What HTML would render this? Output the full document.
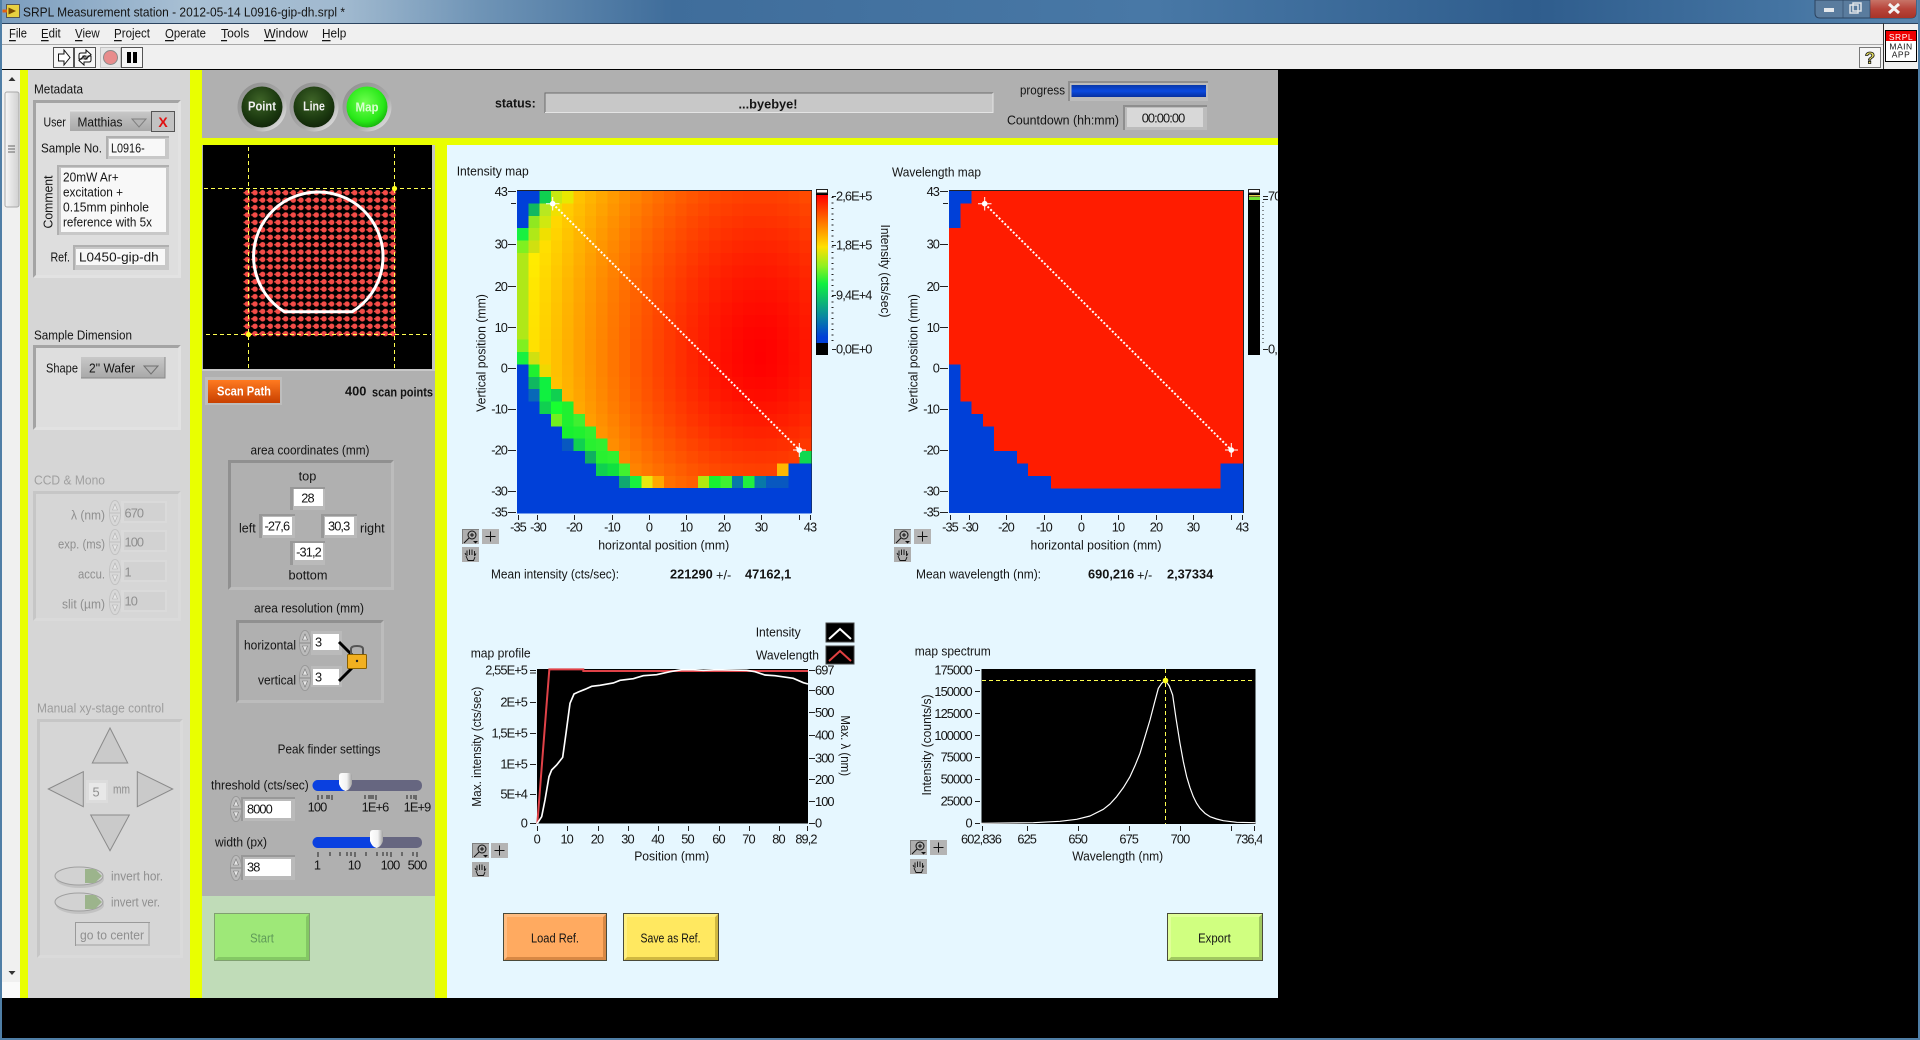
<!DOCTYPE html>
<html><head><meta charset="utf-8"><title>SRPL Measurement station</title>
<style>
html,body{margin:0;padding:0;background:#000;width:1920px;height:1040px;overflow:hidden}
svg{display:block}
text{font-family:"Liberation Sans","DejaVu Sans",sans-serif;font-size:12.8px;fill:#141414;dominant-baseline:central}
.m{text-anchor:middle}.e{text-anchor:end}.b{font-weight:bold}
.d text,text.d{fill:#8f8f8f}
.n text,text.n{letter-spacing:-.9px}
.w{fill:#fff}
</style></head><body>
<svg xmlns="http://www.w3.org/2000/svg" width="1920" height="1040" viewBox="0 0 1920 1040">
<defs>
<linearGradient id="tb" x1="0" x2="1" y1="0" y2="0"><stop offset="0" stop-color="#7b9dbe"/><stop offset=".1" stop-color="#a9c0d4"/><stop offset=".18" stop-color="#a0b9cf"/><stop offset=".25" stop-color="#6f94b6"/><stop offset=".35" stop-color="#3f6d9b"/><stop offset=".6" stop-color="#4878a6"/><stop offset=".8" stop-color="#2f5d8d"/><stop offset=".93" stop-color="#4474a2"/><stop offset="1" stop-color="#5a86ae"/></linearGradient>
<linearGradient id="cb" x1="0" x2="0" y1="0" y2="1"><stop offset="0" stop-color="#ff0000"/><stop offset=".2" stop-color="#ff8000"/><stop offset=".35" stop-color="#ffe000"/><stop offset=".48" stop-color="#90f020"/><stop offset=".6" stop-color="#10f040"/><stop offset=".82" stop-color="#0888a0"/><stop offset=".96" stop-color="#0040d8"/><stop offset="1" stop-color="#0040d8"/></linearGradient>
<linearGradient id="hmf" x1="0" x2="1" y1="0" y2="0"><stop offset="0" stop-color="#ffd000"/><stop offset=".3" stop-color="#ff9000"/><stop offset=".7" stop-color="#ff2800"/><stop offset="1" stop-color="#ff3000"/></linearGradient>
<linearGradient id="or" x1="0" x2="0" y1="0" y2="1"><stop offset="0" stop-color="#ff7a20"/><stop offset="1" stop-color="#c84000"/></linearGradient>
<linearGradient id="drop" x1="0" x2="0" y1="0" y2="1"><stop offset="0" stop-color="#c8c8c8"/><stop offset="1" stop-color="#a8a8a8"/></linearGradient>
<linearGradient id="bar" x1="0" x2="0" y1="0" y2="1"><stop offset="0" stop-color="#0838a8"/><stop offset=".5" stop-color="#0a4ae0"/><stop offset="1" stop-color="#0630a0"/></linearGradient>
<linearGradient id="thumb" x1="0" x2="1" y1="0" y2="0"><stop offset="0" stop-color="#f6f6f6"/><stop offset="1" stop-color="#d0d0d0"/></linearGradient>
<linearGradient id="knob" x1="0" x2="1" y1="0" y2="0"><stop offset="0" stop-color="#fff"/><stop offset=".6" stop-color="#f2f2f2"/><stop offset="1" stop-color="#a0a0a0"/></linearGradient>
<linearGradient id="closeb" x1="0" x2="0" y1="0" y2="1"><stop offset="0" stop-color="#c87468"/><stop offset=".5" stop-color="#b8443a"/><stop offset="1" stop-color="#a83428"/></linearGradient>
<radialGradient id="ledd" cx=".45" cy=".35" r=".75"><stop offset="0" stop-color="#3f6528"/><stop offset=".6" stop-color="#1c3a10"/><stop offset="1" stop-color="#0c1c06"/></radialGradient>
<radialGradient id="ledg" cx=".45" cy=".4" r=".7"><stop offset="0" stop-color="#70ff50"/><stop offset=".65" stop-color="#28e818"/><stop offset="1" stop-color="#109808"/></radialGradient>
<linearGradient id="ring" x1="0" x2="1" y1="0" y2="1"><stop offset="0" stop-color="#8e8e8e"/><stop offset=".6" stop-color="#a8a8a8"/><stop offset="1" stop-color="#f0f0f0"/></linearGradient>
<pattern id="dots" x="243.5" y="189" width="7.67" height="7.42" patternUnits="userSpaceOnUse"><circle cx="3.8" cy="3.7" r="2.7" fill="#f44c48"/><rect x="0" y="3" width="2" height="1.4" fill="#f44c48"/></pattern>
<symbol id="spin" viewBox="0 0 12 26" width="12" height="26"><ellipse cx="6" cy="13" rx="5.6" ry="12.6" fill="#bbb" stroke="#999"/><path d="M.5 13H11.5" stroke="#888"/><path d="M6 4 3.5 10H8.5ZM6 22 3.5 16H8.5Z" fill="#e6e6e6" stroke="#777" stroke-width=".6"/></symbol>
<symbol id="spind" viewBox="0 0 12 26" width="12" height="26"><ellipse cx="6" cy="13" rx="5.6" ry="12.6" fill="#d8d8d8" stroke="#c2c2c2"/><path d="M.5 13H11.5" stroke="#c0c0c0"/><path d="M6 4 3.5 10H8.5ZM6 22 3.5 16H8.5Z" fill="#e6e6e6" stroke="#b0b0b0" stroke-width=".6"/></symbol>
<symbol id="zi" viewBox="0 0 17 15" width="17" height="15"><rect width="17" height="15" fill="#aeaeae"/><path d="M0 0H17V1H1V15H0Z" fill="#808080"/><circle cx="10" cy="6" r="4" fill="none" stroke="#111"/><path d="M8 6H12M10 4V8M7 9 2 14" stroke="#111" fill="none"/><path d="M11 12H16L13.5 14.5Z" fill="#111"/></symbol>
<symbol id="pl" viewBox="0 0 17 15" width="17" height="15"><rect width="17" height="15" fill="#b4b4b4"/><path d="M8.5 2.5V12.5M3.5 7.5H13.5" stroke="#111"/></symbol>
<symbol id="hd" viewBox="0 0 17 15" width="17" height="15"><rect width="17" height="15" fill="#aeaeae"/><path d="M4 8 3 6M5 9V4.5M5 5V3.5M7.5 8V2.5M10 8V2.5M12.5 8.5V4M12.5 9 14 6.5M4 9 6 13.5H11.5L13 10" stroke="#111" fill="none" stroke-width=".9"/></symbol>
</defs>

<rect width="1920" height="1040" fill="#000"/>
<!-- window chrome -->
<rect width="1920" height="23" fill="url(#tb)"/>
<rect x="0" y="0" width="2" height="1040" fill="#4f7ea6"/>
<rect y="1038" width="1920" height="2" fill="#4f7ea6"/>
<rect x="1918" y="0" width="2" height="1040" fill="#4f7ea6"/>
<rect x="6.5" y="4.5" width="13" height="13" fill="#e8d040" stroke="#555"/><path d="M8.5 7.5 16 11 8.5 14.5Z" fill="#7a4a00"/><path d="M2.5 11H7" stroke="#e06010" stroke-width="3"/>
<text x="23" y="12" style="font-size:13px" textLength="322">SRPL Measurement station - 2012-05-14 L0916-gip-dh.srpl *</text>
<path d="M1815 0V13Q1815 18 1820 18H1911Q1916 18 1916 13V0Z" fill="#5a7c9e" stroke="#2c4460"/>
<path d="M1870 0H1916V13Q1916 18 1911 18H1870Z" fill="url(#closeb)"/>
<path d="M1843 0V18M1870 0V18" stroke="#2c4460" stroke-opacity=".6"/>
<rect x="1824" y="8" width="10" height="4" fill="#e4e8ec"/>
<rect x="1850" y="5" width="8" height="8" fill="none" stroke="#dfe4e8" stroke-width="1.5"/><rect x="1853" y="3" width="8" height="8" fill="none" stroke="#dfe4e8" stroke-width="1.5"/>
<path d="M1889 4 1899 13M1899 4 1889 13" stroke="#f4f4f4" stroke-width="3"/>

<rect x="2" y="23" width="1916" height="46" fill="#f0f0f0"/>
<rect x="2" y="23" width="1916" height="1" fill="#2c4460"/>
<rect x="2" y="44" width="1881" height="1" fill="#a8a8a8"/>
<rect x="2" y="69" width="1916" height="1" fill="#000"/>
<rect x="1883" y="23" width="1" height="46" fill="#333"/>
<g>
<text x="9" y="33" textLength="18"><tspan text-decoration="underline">F</tspan>ile</text>
<text x="41" y="33" textLength="19.7"><tspan text-decoration="underline">E</tspan>dit</text>
<text x="75" y="33" textLength="24.7"><tspan text-decoration="underline">V</tspan>iew</text>
<text x="114" y="33" textLength="36"><tspan text-decoration="underline">P</tspan>roject</text>
<text x="165" y="33" textLength="41"><tspan text-decoration="underline">O</tspan>perate</text>
<text x="221" y="33" textLength="28.3"><tspan text-decoration="underline">T</tspan>ools</text>
<text x="264" y="33" textLength="44"><tspan text-decoration="underline">W</tspan>indow</text>
<text x="322" y="33" textLength="24.3"><tspan text-decoration="underline">H</tspan>elp</text>
</g>
<!-- toolbar -->
<rect x="53.5" y="47.5" width="20" height="20" fill="#f6f6f6" stroke="#555"/>
<path d="M58.5 54H64V50L70 57.5 64 65V61H58.5Z" fill="#fff" stroke="#111"/>
<rect x="74.5" y="47.5" width="21" height="20" fill="#f6f6f6" stroke="#555"/>
<path d="M79 59V55Q79 53 81 53H86V50L91 54.5 86 59V56H83L82 59ZM91 56V60Q91 62 89 62H84V65L79 60.5 84 56V59H87L88 56Z" fill="#fff" stroke="#111"/>
<rect x="100.5" y="47.5" width="20" height="20" fill="#e6e6e6" stroke="#c4c4c4"/>
<circle cx="110.5" cy="57.5" r="7" fill="#e88c8c" stroke="#8a8a8a"/>
<rect x="121.5" y="47.5" width="21" height="20" fill="#f6f6f6" stroke="#555"/>
<rect x="127" y="52" width="4" height="11" fill="#000"/><rect x="133" y="52" width="4" height="11" fill="#000"/>
<rect x="1859.5" y="47.5" width="21" height="20" fill="#f6f6f6" stroke="#777"/>
<text x="1870" y="58" class="m b" style="font-size:17px;fill:#e8e060;stroke:#111;stroke-width:.8">?</text>
<rect x="1885.5" y="30.5" width="31" height="31" fill="#fff" stroke="#000"/>
<rect x="1886" y="31" width="30" height="10" fill="#ee0000"/>
<text x="1901" y="37" class="m w" style="font-size:8.5px;fill:#fff;letter-spacing:.5px">SRPL</text>
<text x="1901" y="46.5" class="m" style="font-size:8.5px;letter-spacing:.5px">MAIN</text>
<text x="1901" y="54.5" class="m" style="font-size:8.5px;letter-spacing:.5px">APP</text>

<!-- scrollbar -->
<rect x="2" y="70" width="18" height="928" fill="#f0f0f0"/>
<rect x="2" y="982" width="18" height="16" fill="#fafafa"/>
<path d="M12 77 8.5 81H15.5Z" fill="#333"/>
<rect x="5" y="92" width="14" height="115" rx="2" fill="url(#thumb)" stroke="#a8a8a8"/>
<path d="M8 146H15M8 149H15M8 152H15" stroke="#666"/>
<path d="M8.5 971H15.5L12 975Z" fill="#333"/>

<!-- panels -->
<rect x="20" y="70" width="8" height="928" fill="#e9ff00"/>
<rect x="28" y="70" width="162" height="928" fill="#d6d6d6"/>
<rect x="190" y="70" width="12" height="928" fill="#e9ff00"/>
<rect x="202" y="70" width="233" height="826" fill="#b0b0b0"/>
<rect x="202" y="896" width="233" height="102" fill="#c0dcb8"/>
<rect x="435" y="145" width="12" height="853" fill="#e9ff00"/>
<rect x="202" y="70" width="1076" height="68" fill="#b0b0b0"/>
<rect x="202" y="138" width="1076" height="7" fill="#e9ff00"/>
<rect x="447" y="145" width="831" height="853" fill="#e6f7ff"/>

<!-- Left panel boxes -->
<text x="34" y="89" textLength="49">Metadata</text>
<g fill="#dedede">
<path d="M33 100H181L178 103H36V275L33 278Z" fill="#a4a4a4"/><path d="M181 100V278H33L36 275H178V103Z" fill="#e2e2e2"/><rect x="36" y="103" width="142" height="172"/>
<path d="M33 345H181L178 348H36V427L33 430Z" fill="#a4a4a4"/><path d="M181 345V430H33L36 427H178V348Z" fill="#e2e2e2"/><rect x="36" y="348" width="142" height="79"/>
<path d="M33 491H181L178 494H36V618L33 621Z" fill="#c6c6c6"/><path d="M181 491V621H33L36 618H178V494Z" fill="#dadada"/><rect x="36" y="494" width="142" height="124" fill="#d6d6d6"/>
<path d="M37 719H183L180 722H40V955L37 958Z" fill="#c6c6c6"/><path d="M183 719V958H37L40 955H180V722Z" fill="#dadada"/><rect x="40" y="722" width="140" height="233" fill="#d6d6d6"/>
</g>
<text x="43.5" y="122" textLength="22.3">User</text>
<rect x="70" y="111" width="81" height="20" fill="url(#drop)"/><path d="M70 111H151" stroke="#eee" stroke-width=".8"/>
<text x="77.5" y="122" textLength="45">Matthias</text>
<path d="M132 119H146L139 127Z" fill="#b4b4b4" stroke="#808080"/>
<rect x="151.5" y="111.5" width="23" height="20" fill="#c2c2c2" stroke="#555"/>
<text x="163" y="122" class="m b" style="fill:#e01010;font-size:14px">X</text>
<text x="41" y="148" textLength="61">Sample No.</text>
<rect x="106" y="136" width="63" height="23" fill="#c8c8c8"/><path d="M106 136H169V138H108V159H106Z" fill="#b0b0b0"/><rect x="109" y="139" width="56" height="17" fill="#f8f8f8"/>
<text x="111" y="148" textLength="33.7">L0916-</text>
<rect x="57" y="165" width="112" height="70" fill="#c8c8c8"/><path d="M57 165H169V167H59V235H57Z" fill="#b0b0b0"/><rect x="61" y="168" width="105" height="64" fill="#f8f8f8"/>
<text x="63" y="177" textLength="55.7">20mW Ar+</text><text x="63" y="192" textLength="60">excitation +</text><text x="63" y="207" textLength="86">0.15mm pinhole</text><text x="63" y="222" textLength="89">reference with 5x</text>
<text transform="translate(48 202) rotate(-90)" class="m" textLength="53">Comment</text>
<text x="50.5" y="257" textLength="19.5">Ref.</text>
<rect x="73" y="245" width="96" height="25" fill="#c8c8c8"/><path d="M73 245H169V247H75V270H73Z" fill="#b0b0b0"/><rect x="76" y="249" width="89" height="16" fill="#f8f8f8"/>
<text x="79" y="257" textLength="79.7">L0450-gip-dh</text>

<text x="34" y="335" textLength="98">Sample Dimension</text>
<text x="46" y="368" textLength="32">Shape</text>
<rect x="81" y="357" width="84" height="21" fill="url(#drop)"/><path d="M165 357V378H81" stroke="#888" fill="none"/>
<text x="89" y="368" textLength="46">2'' Wafer</text>
<path d="M144 366H158L151 374Z" fill="#b4b4b4" stroke="#707070"/>

<g class="d">
<text x="34" y="480" style="fill:#a0a0a0" textLength="71">CCD &amp; Mono</text>
<text x="105" y="515" class="e" textLength="34">λ (nm)</text>
<text x="105" y="544" class="e" textLength="47">exp. (ms)</text>
<text x="105" y="574" class="e" textLength="27">accu.</text>
<text x="105" y="604" class="e" textLength="43">slit (µm)</text>
<rect x="121" y="501" width="46" height="22" fill="#dadada"/><rect x="124" y="503" width="41" height="18" fill="#d2d2d2"/>
<rect x="121" y="530" width="46" height="22" fill="#dadada"/><rect x="124" y="532" width="41" height="18" fill="#d2d2d2"/>
<rect x="121" y="560" width="46" height="22" fill="#dadada"/><rect x="124" y="562" width="41" height="18" fill="#d2d2d2"/>
<rect x="121" y="590" width="46" height="22" fill="#dadada"/><rect x="124" y="592" width="41" height="18" fill="#d2d2d2"/>
<use href="#spind" x="109" y="500"/><use href="#spind" x="109" y="529"/><use href="#spind" x="109" y="559"/><use href="#spind" x="109" y="589"/>
<g class="n"><text x="124.5" y="513">670</text><text x="124.5" y="542">100</text><text x="124.5" y="572">1</text><text x="124.5" y="601">10</text></g>
<text x="37" y="708" style="fill:#9c9c9c" textLength="127">Manual xy-stage control</text>
<path d="M110 728 92.3 763H127.7ZM48.3 789 83.3 771.7V806.7ZM137.3 771.7V806.7L172.7 789ZM90.7 815H129.3L110 850.7Z" fill="#cacaca" stroke="#8a8a8a"/>
<rect x="86" y="780" width="22" height="23" fill="#dcdcdc"/><rect x="89" y="783" width="17" height="17" fill="#e8e8e8"/>
<text x="96" y="792" class="m">5</text><text x="113" y="789" textLength="17">mm</text>
<ellipse cx="80" cy="879" rx="24" ry="9" fill="#c2c2c2"/><ellipse cx="79" cy="876" rx="24" ry="9" fill="#d2d2d2" stroke="#a0a0a0"/><path d="M85 869H95L102 876 95 883H85Z" fill="#9cb48c"/>
<ellipse cx="80" cy="905" rx="24" ry="9" fill="#c2c2c2"/><ellipse cx="79" cy="902" rx="24" ry="9" fill="#d2d2d2" stroke="#a0a0a0"/><path d="M85 895H95L102 902 95 909H85Z" fill="#9cb48c"/>
<text x="111" y="876" textLength="52">invert hor.</text><text x="111" y="902" textLength="49">invert ver.</text>
<rect x="75.5" y="922.5" width="74" height="23" fill="#d8d8d8" stroke="#9a9a9a"/><path d="M76 945H149V923" stroke="#bcbcbc" stroke-width="2" fill="none"/>
<text x="112" y="935" class="m" textLength="64">go to center</text>
</g>

<!-- Middle: preview -->
<rect x="432" y="145" width="3" height="226" fill="#c4c4c4"/><rect x="202" y="369" width="233" height="2" fill="#c8c8c8"/>
<rect x="203" y="145" width="229" height="224" fill="#000"/>
<rect x="243.5" y="189" width="153.4" height="148.4" fill="url(#dots)"/>
<path d="M284.3 311.7A64.7 64.7 0 1 1 352.3 311.7Z" fill="none" stroke="#fff" stroke-width="3"/>
<path d="M204 188.5H431M206 334.5H431M248.5 147V369M394.5 147V369" stroke="#ffff50" stroke-dasharray="4 3" fill="none"/>
<circle cx="394.5" cy="188.5" r="2.6" fill="#ffff20"/><circle cx="248.5" cy="334.5" r="2.6" fill="#ffff20"/>

<rect x="205" y="377" width="77" height="28" fill="#bdbdbd"/>
<rect x="208" y="380" width="72" height="23" fill="url(#or)"/>
<text x="244" y="391" class="m b" style="fill:#fff" textLength="54">Scan Path</text>
<text x="345" y="391" class="b">400</text><text x="372" y="392" class="b" textLength="61">scan points</text>

<text x="310" y="450" class="m" textLength="119">area coordinates (mm)</text>
<path d="M228 460H394L391 463H231V587L228 590Z" fill="#909090"/><path d="M394 460V590H228L231 587H391V463Z" fill="#bcbcbc"/>
<text x="307.5" y="476" class="m" textLength="17.7">top</text>
<g>
<rect x="290" y="487" width="35" height="23" fill="#bababa"/><path d="M290 487H325V489H293V510H290Z" fill="#989898"/><rect x="294" y="489" width="29" height="17" fill="#fff"/>
<rect x="259" y="514" width="36" height="24" fill="#bababa"/><path d="M259 514H295V516H262V538H259Z" fill="#989898"/><rect x="263" y="517" width="29" height="18" fill="#fff"/>
<rect x="321" y="514" width="36" height="24" fill="#bababa"/><path d="M321 514H357V516H324V538H321Z" fill="#989898"/><rect x="325" y="517" width="29" height="18" fill="#fff"/>
<rect x="290" y="541" width="35" height="24" fill="#bababa"/><path d="M290 541H325V543H293V565H290Z" fill="#989898"/><rect x="295" y="543" width="28" height="17" fill="#fff"/>
</g>
<text x="307.5" y="498" class="m n">28</text>
<text x="239" y="528" textLength="16.7">left</text><text x="264.5" y="526" class="n">-27,6</text>
<text x="328" y="526" class="n">30,3</text><text x="360" y="528" textLength="24.7">right</text>
<text x="308.5" y="552" class="m n">-31,2</text>
<text x="308" y="575" class="m" textLength="39">bottom</text>

<text x="309" y="608" class="m" textLength="110">area resolution (mm)</text>
<path d="M236 620H384L381 623H239V700L236 703Z" fill="#909090"/><path d="M384 620V703H236L239 700H381V623Z" fill="#bcbcbc"/>
<text x="296" y="645" class="e" textLength="52">horizontal</text><text x="296" y="680" class="e" textLength="38">vertical</text>
<rect x="311" y="631" width="31" height="24" fill="#bababa"/><rect x="313" y="634" width="26" height="16" fill="#fff"/>
<rect x="311" y="666" width="31" height="21" fill="#bababa"/><rect x="313" y="669" width="26" height="16" fill="#fff"/>
<use href="#spin" x="299" y="630"/><use href="#spin" x="299" y="665"/>
<text x="315" y="642">3</text><text x="315" y="677">3</text>
<path d="M339 642 352 655M339 681 352 668" stroke="#000" stroke-width="3"/>
<path d="M351 655V649Q351 646 357 646 363 646 363 649V655" fill="none" stroke="#555" stroke-width="2"/>
<rect x="347.5" y="654.5" width="19" height="14" rx="1" fill="#f2b020" stroke="#8a6000"/><circle cx="357" cy="661" r="1.2" fill="#222"/>

<text x="329" y="749" class="m" textLength="102.7">Peak finder settings</text>
<text x="211" y="785" textLength="97.7">threshold (cts/sec)</text>
<rect x="313" y="780" width="109" height="11" rx="5" fill="#666680"/><path d="M318 780H345V791H318A5 5 0 0 1 318 780Z" fill="#0a40e0"/>
<path d="M339 776Q339 773 342 773H349Q352 773 352 776V784Q350 790 345.5 791 341 790 339 784Z" fill="url(#knob)"/>
<path d="M318 795V800M322 795V799M327 795V799M329 795V799M332 795V800M365 795V799M369 795V799M371 795V799M373 795V799M376 795V800M407 795V799M411 795V799M414 795V799M416 795V800" stroke="#222" fill="none"/>
<g class="n"><text x="317" y="807" class="m">100</text><text x="375" y="807" class="m">1E+6</text><text x="417" y="807" class="m">1E+9</text></g>
<rect x="241" y="797" width="54" height="24" fill="#bababa"/><path d="M241 797H295V799H243V821H241Z" fill="#989898"/><rect x="245" y="801" width="46" height="17" fill="#fff"/>
<use href="#spin" x="230" y="796"/><text x="247" y="809" class="n">8000</text>
<text x="215" y="842" textLength="52">width (px)</text>
<rect x="313" y="837" width="109" height="11" rx="5" fill="#666680"/><path d="M318 837H376V848H318A5 5 0 0 1 318 837Z" fill="#0a40e0"/>
<path d="M370 833Q370 830 373 830H380Q383 830 383 833V841Q381 847 376.5 848 372 847 370 841Z" fill="url(#knob)"/>
<path d="M318 852V857M330 852V856M340 852V856M347 852V856M351 852V856M355 852V857M366 852V856M377 852V856M383 852V856M387 852V856M391 852V857M402 852V856M413 852V856M417 852V857" stroke="#222" fill="none"/>
<g class="n"><text x="317" y="865" class="m">1</text><text x="354" y="865" class="m">10</text><text x="390" y="865" class="m">100</text><text x="417" y="865" class="m">500</text></g>
<rect x="241" y="855" width="54" height="25" fill="#bababa"/><path d="M241 855H295V857H243V880H241Z" fill="#989898"/><rect x="245" y="859" width="46" height="17" fill="#fff"/>
<use href="#spin" x="230" y="855"/><text x="247" y="867" class="n">38</text>

<rect x="214.5" y="913.5" width="95" height="47" fill="#9ee878" stroke="#80a070"/>
<path d="M215 960H309V914L306 917V957H218Z" fill="#84c864"/>
<text x="262" y="938" class="m" style="fill:#5f9a58" textLength="23.7">Start</text>

<!-- Header LEDs -->
<circle cx="262" cy="107" r="24.5" fill="url(#ring)"/><circle cx="262" cy="107" r="20.5" fill="url(#ledd)"/>
<circle cx="314" cy="107" r="24.5" fill="url(#ring)"/><circle cx="314" cy="107" r="20.5" fill="url(#ledd)"/>
<circle cx="367" cy="107" r="24.5" fill="url(#ring)"/><circle cx="367" cy="107" r="20.5" fill="url(#ledg)"/>
<text x="262" y="106" class="m b" style="fill:#f0f0f0" textLength="28">Point</text>
<text x="314" y="106" class="m b" style="fill:#f0f0f0" textLength="21.7">Line</text>
<text x="367" y="107" class="m b" style="fill:#d8ffd0" textLength="23">Map</text>
<text x="495" y="103" class="b" textLength="40.7">status:</text>
<rect x="545" y="93" width="448" height="20" fill="#c8c8c8"/><path d="M545 113V93H993" fill="none" stroke="#6c6c6c"/><path d="M545 112.5H993V93" fill="none" stroke="#e4e4e4"/>
<text x="768" y="104" class="m b" textLength="59">...byebye!</text>
<text x="1020" y="90" textLength="45">progress</text>
<rect x="1068" y="81" width="140" height="20" fill="#bcbcbc"/><path d="M1068 81H1208V83H1070V101H1068Z" fill="#8e8e8e"/>
<rect x="1071.5" y="85" width="134.5" height="12" fill="url(#bar)"/>
<text x="1007" y="120" textLength="112">Countdown (hh:mm)</text>
<rect x="1123" y="105" width="84" height="25" fill="#bcbcbc"/><path d="M1123 105H1207V107H1125V130H1123Z" fill="#8e8e8e"/>
<rect x="1127" y="108" width="76" height="19" fill="#d8d8d8"/>
<text x="1163" y="118" class="m n">00:00:00</text>

<!-- Intensity map -->
<text x="456.7" y="171" textLength="72">Intensity map</text>
<rect x="517" y="190" width="295" height="323" fill="#222"/>
<rect x="517" y="191" width="294" height="322" fill="url(#hmf)"/>
<g id="hm" shape-rendering="crispEdges"></g>
<path d="M552.7 203.7 799.3 450" stroke="#fff" stroke-width="2" stroke-dasharray="2 2"/>
<path d="M552.7 197V210.5M546 203.7H559.5M799.3 443V457M793 450H806" stroke="#fff"/><circle cx="552.7" cy="203.7" r="2.8" fill="#fff"/><circle cx="799.3" cy="450" r="2.8" fill="#fff"/>
<path d="M508 191.5H516M511 203.5H516M508 244.5H516M508 286.5H516M508 327.5H516M508 368.5H516M508 409.5H516M508 450.5H516M508 491.5H516M508 512.5H516M518.5 515V520M537.5 515V520M574.5 515V520M612.5 515V520M649.5 515V520M686.5 515V520M724.5 515V520M761.5 515V520M799.5 515V520M810.5 515V520" stroke="#222" fill="none"/>
<g class="n">
<text x="507" y="191.5" class="e">43</text><text x="507" y="244" class="e">30</text><text x="507" y="286.5" class="e">20</text><text x="507" y="327.5" class="e">10</text><text x="507" y="368" class="e">0</text><text x="507" y="409" class="e">-10</text><text x="507" y="450" class="e">-20</text><text x="507" y="491" class="e">-30</text><text x="507" y="512" class="e">-35</text>
<text x="518" y="527" class="m">-35</text><text x="538" y="527" class="m">-30</text><text x="574" y="527" class="m">-20</text><text x="612" y="527" class="m">-10</text><text x="649" y="527" class="m">0</text><text x="686" y="527" class="m">10</text><text x="724" y="527" class="m">20</text><text x="761" y="527" class="m">30</text><text x="810" y="527" class="m">43</text>
</g>
<text x="663.7" y="545" class="m" textLength="131">horizontal position (mm)</text>
<text transform="translate(481 353) rotate(-90)" class="m" textLength="117.7">Vertical position (mm)</text>
<rect x="816" y="189" width="12" height="166" fill="#000"/><rect x="816.5" y="189.5" width="11" height="3.5" fill="#fff" stroke="#222"/>
<rect x="816.5" y="195" width="11.5" height="148" fill="url(#cb)"/>
<path d="M832 196.5H836M832 245.5H836M832 295.5H836M832 349.5H836" stroke="#222"/>
<path d="M832.5 197V345" stroke="#222" stroke-width="2" stroke-dasharray="1 4.5"/>
<g class="n"><text x="836" y="196">2,6E+5</text><text x="836" y="245">1,8E+5</text><text x="836" y="295">9,4E+4</text><text x="836" y="349">0,0E+0</text></g>
<text transform="translate(885.7 271) rotate(90)" class="m" textLength="93">Intensity (cts/sec)</text>
<use href="#zi" x="462" y="529"/><use href="#pl" x="482" y="529"/><use href="#hd" x="462" y="547"/>
<text x="491" y="574" textLength="128">Mean intensity (cts/sec):</text>
<text x="670" y="574" class="b">221290</text><text x="716" y="575">+/-</text><text x="745" y="574" class="b">47162,1</text>

<!-- Wavelength map -->
<text x="892" y="172" textLength="89">Wavelength map</text>
<rect x="949" y="190" width="295" height="323" fill="#222"/>
<rect x="949" y="191" width="294" height="322" fill="#ff1c00"/>
<g shape-rendering="crispEdges" fill="#0040d8">
<rect x="949" y="191" width="22.6" height="12.4"/>
<rect x="949" y="203.4" width="11.3" height="24.8"/>
<rect x="949" y="364.6" width="11.3" height="37.1"/>
<rect x="949" y="401.6" width="22.6" height="12.4"/>
<rect x="949" y="414" width="33.9" height="12.4"/>
<rect x="949" y="426.4" width="45.2" height="24.8"/>
<rect x="949" y="451.2" width="67.8" height="12.4"/>
<rect x="949" y="463.5" width="79.1" height="12.4"/>
<rect x="949" y="475.9" width="101.8" height="12.4"/>
<rect x="949" y="488.3" width="294" height="24.7"/>
<rect x="1220.4" y="463.5" width="22.6" height="25"/>
</g>
<path d="M984.7 203.7 1231.3 450" stroke="#fff" stroke-width="2" stroke-dasharray="2 2"/>
<path d="M984.7 197V210.5M978 203.7H991.5M1231.3 443V457M1225 450H1238" stroke="#fff"/><circle cx="984.7" cy="203.7" r="2.8" fill="#fff"/><circle cx="1231.3" cy="450" r="2.8" fill="#fff"/>
<path d="M940 191.5H948M943 203.5H948M940 244.5H948M940 286.5H948M940 327.5H948M940 368.5H948M940 409.5H948M940 450.5H948M940 491.5H948M940 512.5H948M950.5 515V520M969.5 515V520M1006.5 515V520M1044.5 515V520M1081.5 515V520M1118.5 515V520M1156.5 515V520M1193.5 515V520M1231.5 515V520M1242.5 515V520" stroke="#222" fill="none"/>
<g class="n">
<text x="939" y="191.5" class="e">43</text><text x="939" y="244" class="e">30</text><text x="939" y="286.5" class="e">20</text><text x="939" y="327.5" class="e">10</text><text x="939" y="368" class="e">0</text><text x="939" y="409" class="e">-10</text><text x="939" y="450" class="e">-20</text><text x="939" y="491" class="e">-30</text><text x="939" y="512" class="e">-35</text>
<text x="950" y="527" class="m">-35</text><text x="970" y="527" class="m">-30</text><text x="1006" y="527" class="m">-20</text><text x="1044" y="527" class="m">-10</text><text x="1081" y="527" class="m">0</text><text x="1118" y="527" class="m">10</text><text x="1156" y="527" class="m">20</text><text x="1193" y="527" class="m">30</text><text x="1242" y="527" class="m">43</text>
</g>
<text x="1096" y="545" class="m" textLength="131">horizontal position (mm)</text>
<text transform="translate(913 353) rotate(-90)" class="m" textLength="117.7">Vertical position (mm)</text>
<rect x="1248" y="189" width="12" height="166" fill="#000"/><rect x="1248.5" y="189.5" width="11" height="3.5" fill="#fff" stroke="#222"/>
<rect x="1249" y="195" width="11" height="1.5" fill="#e8d050"/><rect x="1249" y="197" width="11" height="3" fill="#70e030"/>
<path d="M1263 196.5H1268M1263 199.5H1268" stroke="#222"/>
<path d="M1263 202V345M1263 349.5H1268" stroke="#222" stroke-dasharray="1 3"/>
<path d="M1263.5 349.5H1268" stroke="#222"/>
<g class="n"><text x="1268" y="196">70</text><text x="1268" y="349">0,</text></g>
<use href="#zi" x="894" y="529"/><use href="#pl" x="914" y="529"/><use href="#hd" x="894" y="547"/>
<text x="916" y="574" textLength="125">Mean wavelength (nm):</text>
<text x="1088" y="574" class="b">690,216</text><text x="1137" y="575">+/-</text><text x="1167" y="574" class="b">2,37334</text>

<!-- map profile -->
<text x="470.7" y="653" textLength="60">map profile</text>
<text x="755.7" y="632" textLength="45">Intensity</text><text x="756" y="655" textLength="63">Wavelength</text>
<rect x="826" y="623" width="28" height="19" fill="#000" stroke="#444"/><path d="M829 639 840 629 851 639" fill="none" stroke="#fff" stroke-width="2"/>
<rect x="826" y="646" width="28" height="18" fill="#000" stroke="#444"/><path d="M829 661 840 651 851 661" fill="none" stroke="#e04040" stroke-width="2"/>
<rect x="537" y="669" width="271" height="154.5" fill="#000"/>
<g transform="translate(450 610) scale(.33333)">
<polyline fill="none" stroke="#e04248" stroke-width="6" points="262,640 298,178 400,178 400,183 1074,183"/>
<polyline fill="none" stroke="#fff" stroke-width="5" points="262,640 275,620 285,570 297,500 305,480 320,465 338,442 348,370 360,280 372,252 385,246 405,238 425,229 450,226 490,219 510,211 550,206 580,197 620,194 660,185 695,179 730,179 760,181 800,179 890,181 915,185 945,195 975,197 1030,205 1060,218 1074,222"/>
</g>
<path d="M530 670.5H536M530 673H536M530 702.5H536M530 733.5H536M530 764.5H536M530 794.5H536M530 823.5H536M809 670.5H815M809 690.5H815M809 712.5H815M809 735.5H815M809 758.5H815M809 779.5H815M809 801.5H815M809 823.5H815M537.5 826V831M567.5 826V831M598.5 826V831M628.5 826V831M658.5 826V831M688.5 826V831M719.5 826V831M749.5 826V831M779.5 826V831M807.5 826V831" stroke="#222" fill="none"/>
<g class="n">
<text x="527" y="670" class="e">2,55E+5</text><text x="527" y="702" class="e">2E+5</text><text x="527" y="733" class="e">1,5E+5</text><text x="527" y="764" class="e">1E+5</text><text x="527" y="794" class="e">5E+4</text><text x="527" y="823" class="e">0</text>
<text x="815" y="670">697</text><text x="815" y="690.5">600</text><text x="815" y="712.5">500</text><text x="815" y="735">400</text><text x="815" y="758">300</text><text x="815" y="779.5">200</text><text x="815" y="801.5">100</text><text x="815" y="823">0</text>
<text x="536.7" y="839" class="m">0</text><text x="566.7" y="839" class="m">10</text><text x="597" y="839" class="m">20</text><text x="627.5" y="839" class="m">30</text><text x="657.5" y="839" class="m">40</text><text x="687.5" y="839" class="m">50</text><text x="718.5" y="839" class="m">60</text><text x="748.5" y="839" class="m">70</text><text x="778.5" y="839" class="m">80</text><text x="806" y="839" class="m">89,2</text>
</g>
<text x="671.7" y="856" class="m" textLength="75">Position (mm)</text>
<text transform="translate(476.7 746.7) rotate(-90)" class="m" textLength="120">Max. intensity (cts/sec)</text>
<text transform="translate(845.7 745.7) rotate(90)" class="m" textLength="60.7">Max. λ (nm)</text>
<use href="#zi" x="472" y="843"/><use href="#pl" x="491" y="843"/><use href="#hd" x="472" y="862"/>

<!-- map spectrum -->
<text x="914.7" y="651" textLength="76">map spectrum</text>
<rect x="981.5" y="669" width="274" height="155" fill="#000"/>
<path d="M982 680.5H1255M1165.5 669V824" stroke="#ffff50" stroke-dasharray="4 3" fill="none"/>
<g transform="translate(890 620) scale(.33333)">
<polyline fill="none" stroke="#fff" stroke-width="3.6" stroke-linejoin="round" points="274,610 430,608 510,604 560,598 600,588 640,568 660,552 680,530 700,503 720,470 735,437 750,400 765,350 780,300 793,250 805,205 815,190 826,181 838,198 848,225 858,295 870,370 880,425 890,470 900,503 910,530 920,550 930,565 945,580 960,590 980,597 1000,602 1040,607 1096,608"/>
</g>
<circle cx="1165.5" cy="680.5" r="2.8" fill="#ffff20"/>
<path d="M975 670.5H980M975 691.5H980M975 713.5H980M975 735.5H980M975 757.5H980M975 779.5H980M975 801.5H980M975 823.5H980M982.5 826V831M1027.5 826V831M1078.5 826V831M1129.5 826V831M1180.5 826V831M1231.5 826V831M1254.5 826V831" stroke="#222" fill="none"/>
<g class="n">
<text x="971.7" y="670" class="e">175000</text><text x="971.7" y="691.5" class="e">150000</text><text x="971.7" y="713.5" class="e">125000</text><text x="971.7" y="735.5" class="e">100000</text><text x="971.7" y="757" class="e">75000</text><text x="971.7" y="779" class="e">50000</text><text x="971.7" y="801" class="e">25000</text><text x="971.7" y="823" class="e">0</text>
<text x="981" y="839" class="m">602,836</text><text x="1026.7" y="839" class="m">625</text><text x="1077.7" y="839" class="m">650</text><text x="1128.7" y="839" class="m">675</text><text x="1180" y="839" class="m">700</text><text x="1235" y="839">736,4</text>
</g>
<rect x="1262" y="830" width="16" height="18" fill="#e6f7ff"/>
<text x="1117.7" y="856" class="m" textLength="91">Wavelength (nm)</text>
<text transform="translate(926.7 745) rotate(-90)" class="m" textLength="101">Intensity (counts/s)</text>
<use href="#zi" x="910" y="840"/><use href="#pl" x="930" y="840"/><use href="#hd" x="910" y="859"/>

<!-- buttons -->
<rect x="503.5" y="913.5" width="103" height="47" fill="#ffaa60" stroke="#4a4a3a"/><path d="M504 960H606V914L603 917V957H507Z" fill="#d88844"/><path d="M504 914H606L603 917H507V957L504 960Z" fill="#ffbc80"/>
<text x="555" y="938" class="m" textLength="48">Load Ref.</text>
<rect x="623.5" y="913.5" width="95" height="47" fill="#ffe860" stroke="#4a4a3a"/><path d="M624 960H718V914L715 917V957H627Z" fill="#d0b840"/><path d="M624 914H718L715 917H627V957L624 960Z" fill="#fff080"/>
<text x="670.5" y="938" class="m" textLength="60">Save as Ref.</text>
<rect x="1167.5" y="913.5" width="95" height="47" fill="#d0ff80" stroke="#4a4a3a"/><path d="M1168 960H1262V914L1259 917V957H1171Z" fill="#a0c860"/><path d="M1168 914H1262L1259 917H1171V957L1168 960Z" fill="#e0ff98"/>
<text x="1214.5" y="938" class="m" textLength="32.7">Export</text>

<!-- clip black region on the right -->
<rect x="1278" y="70" width="640" height="968" fill="#000"/>
</svg>
<script>
(function(){
document.querySelectorAll('text[textLength]').forEach(function(t){t.setAttribute('lengthAdjust','spacingAndGlyphs')});
var g=document.getElementById('hm'),W=294/26,H=322/26,
st=[2,1,1,0,0,0,0,0,0,0,0,0,0,0,1,1,1,2,3,4,4,6,7,9],
o={'0,2':'#10d050','0,3':'#c8e810','0,4':'#e8e800','1,1':'#10b860','1,2':'#b8e820','1,3':'#f0e000','2,1':'#90e820','2,2':'#d0e810','3,0':'#18f040','3,1':'#b0e818','3,2':'#f0e000','4,0':'#80f020','4,1':'#d0e010','12,0':'#80f020','13,0':'#18f040','13,1':'#d0e010','14,1':'#20f030','14,2':'#f0d800','15,1':'#10b860','15,2':'#10f040','16,1':'#0868b8','16,2':'#10f040','16,3':'#10d050','17,2':'#10d050','17,3':'#18ff30','17,4':'#20f030','18,3':'#70f020','18,4':'#20f030','18,5':'#40f030','19,4':'#18f030','19,5':'#20f030','19,6':'#30f030','20,4':'#0858c0','20,5':'#10d050','20,6':'#28f030','20,7':'#30f030','21,6':'#10b060','21,7':'#28f030','21,8':'#30f030','21,25':'#10d850','22,7':'#10d050','22,8':'#10e040','22,9':'#40f030','22,23':'#ffb800','23,9':'#10a870','23,10':'#18f040','23,11':'#e8e810','23,12':'#ffa800','23,16':'#b0e810','23,17':'#18f030','23,18':'#40f030','23,19':'#0878a8','23,20':'#20f040','23,21':'#0878a8','23,22':'#0858c0','23,23':'#0858c0'};
for(var i=5;i<12;i++)o[i+',0']='#b0e818';
for(var r=0;r<26;r++)for(var c=0;c<26;c++){
 var col='#0040d8',end=r<22?26:24;
 if(r<24&&c>=st[r]&&c<end){
  var k=r+','+c;
  if(o[k])col=o[k];else{
   var dx=c<21?(21-c)/21:(c-21)/20,dy=r<13?(13-r)/32:(r-13)/22,
   d=Math.sqrt(dx*dx+dy*dy),G=Math.min(235,Math.round(242*Math.pow(d,1.5)));
   col='rgb(255,'+G+',0)';
  }
 }
 var e=document.createElementNS('http://www.w3.org/2000/svg','rect');
 e.setAttribute('x',(517+c*W).toFixed(2));e.setAttribute('y',(191+r*H).toFixed(2));
 e.setAttribute('width',(W+.5).toFixed(2));e.setAttribute('height',(H+.5).toFixed(2));e.setAttribute('fill',col);
 g.appendChild(e);
}
})();
</script>
</body></html>
